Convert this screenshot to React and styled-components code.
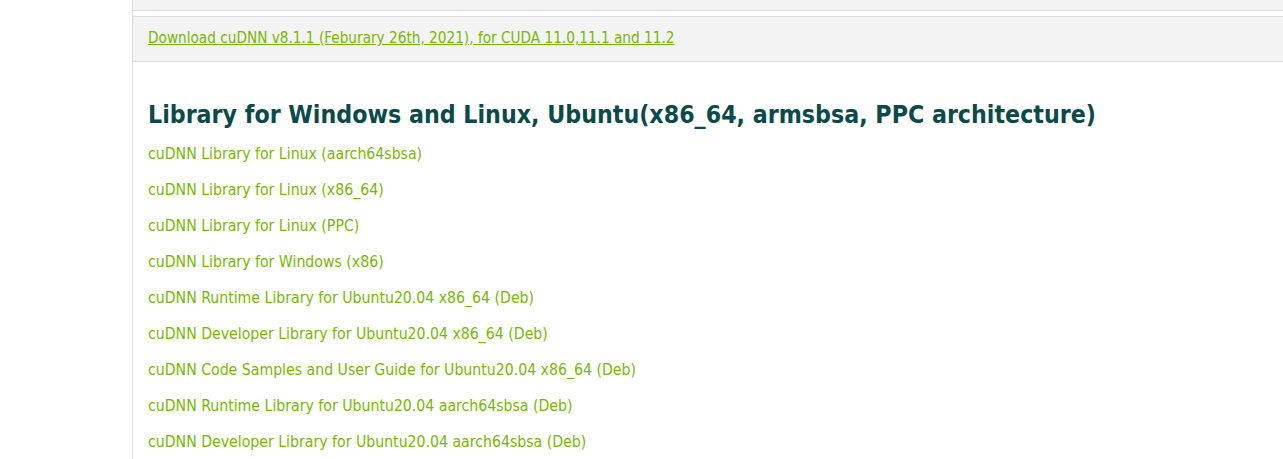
import React from 'react';
import styled, { createGlobalStyle } from 'styled-components';

const GlobalStyle = createGlobalStyle`
  body {
    margin: 0;
    background: #fff;
    font-family: "DejaVu Sans Condensed", "DejaVu Sans", sans-serif;
    overflow: hidden;
  }
`;

const Page = styled.div`
  display: flex;
  min-height: 459px;
`;

const Gutter = styled.div`
  width: 132px;
  flex-shrink: 0;
`;

const Main = styled.div`
  flex: 1;
  border-left: 1px solid #dcdcdc;
  min-height: 459px;
`;

const TopStrip = styled.div`
  height: 10px;
  background: #f3f3f3;
  border-bottom: 1px solid #dcdcdc;
  margin-bottom: 5px;
`;

const DownloadBar = styled.div`
  background: #f3f3f3;
  border-top: 1px solid #dcdcdc;
  border-bottom: 1px solid #dcdcdc;
  height: 44px;
  box-sizing: border-box;
  height: 46px;
  display: flex;
  align-items: center;
  padding: 0 0 2px 15px;
`;

const DownloadLink = styled.a`
  color: #76b900;
  font-size: 15.2px;
  text-decoration: underline;
  cursor: pointer;
`;

const Section = styled.div`
  padding: 38px 0 0 15px;
`;

const Heading = styled.h2`
  margin: 0 0 6px;
  color: #0a4a4a;
  font-size: 24.7px;
  font-weight: 700;
  line-height: 30px;
`;

const LinkList = styled.ul`
  list-style: none;
  margin: 0;
  padding: 0;
`;

const Item = styled.li`
  height: 36px;
  line-height: 36px;
  font-size: 15.7px;
  color: #76b900;
`;

const items = [
  'cuDNN Library for Linux (aarch64sbsa)',
  'cuDNN Library for Linux (x86_64)',
  'cuDNN Library for Linux (PPC)',
  'cuDNN Library for Windows (x86)',
  'cuDNN Runtime Library for Ubuntu20.04 x86_64 (Deb)',
  'cuDNN Developer Library for Ubuntu20.04 x86_64 (Deb)',
  'cuDNN Code Samples and User Guide for Ubuntu20.04 x86_64 (Deb)',
  'cuDNN Runtime Library for Ubuntu20.04 aarch64sbsa (Deb)',
  'cuDNN Developer Library for Ubuntu20.04 aarch64sbsa (Deb)',
];

export default function App() {
  return (
    <Page>
      <GlobalStyle />
      <Gutter />
      <Main>
        <TopStrip />
        <DownloadBar>
          <DownloadLink>
            Download cuDNN v8.1.1 (Feburary 26th, 2021), for CUDA 11.0,11.1 and 11.2
          </DownloadLink>
        </DownloadBar>
        <Section>
          <Heading>
            Library for Windows and Linux, Ubuntu(x86_64, armsbsa, PPC architecture)
          </Heading>
          <LinkList>
            {items.map((text) => (
              <Item key={text}>{text}</Item>
            ))}
          </LinkList>
        </Section>
      </Main>
    </Page>
  );
}
